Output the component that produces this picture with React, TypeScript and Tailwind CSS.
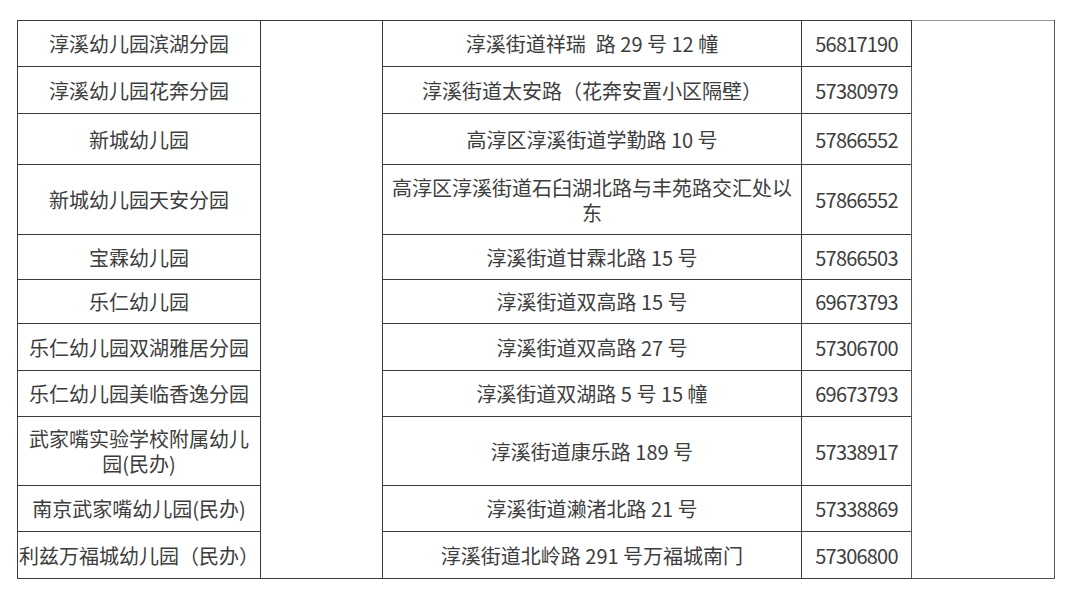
// Kindergarten contact table: name / (blank) / address / phone / (blank)
const rows: { name: React.ReactNode; addr: React.ReactNode; phone: string; h: number }[] = [
  { name: '淳溪幼儿园滨湖分园', addr: '淳溪街道祥瑞\u2002路 29 号 12 幢', phone: '56817190', h: 46 },
  { name: '淳溪幼儿园花奔分园', addr: '淳溪街道太安路（花奔安置小区隔壁）', phone: '57380979', h: 47 },
  { name: '新城幼儿园', addr: '高淳区淳溪街道学勤路 10 号', phone: '57866552', h: 51 },
  {
    name: '新城幼儿园天安分园',
    addr: (
      <>
        高淳区淳溪街道石臼湖北路与丰苑路交汇处以
        <br />
        东
      </>
    ),
    phone: '57866552',
    h: 70,
  },
  { name: '宝霖幼儿园', addr: '淳溪街道甘霖北路 15 号', phone: '57866503', h: 45 },
  { name: '乐仁幼儿园', addr: '淳溪街道双高路 15 号', phone: '69673793', h: 44 },
  { name: '乐仁幼儿园双湖雅居分园', addr: '淳溪街道双高路 27 号', phone: '57306700', h: 47 },
  { name: '乐仁幼儿园美临香逸分园', addr: '淳溪街道双湖路 5 号 15 幢', phone: '69673793', h: 46 },
  {
    name: (
      <>
        武家嘴实验学校附属幼儿
        <br />
        园(民办)
      </>
    ),
    addr: '淳溪街道康乐路 189 号',
    phone: '57338917',
    h: 69,
  },
  { name: '南京武家嘴幼儿园(民办)', addr: '淳溪街道濑渚北路 21 号', phone: '57338869', h: 46 },
  { name: '利兹万福城幼儿园（民办）', addr: '淳溪街道北岭路 291 号万福城南门', phone: '57306800', h: 47 },
]

const cell = 'border-[1.5px] border-[#3c3c3c] text-center align-middle p-0 leading-[25px]'

export default function App() {
  return (
    <div className="w-[1080px] h-[604px] bg-white pt-[20px] pl-[17px] overflow-hidden">
      <table
        className="table-fixed border-collapse text-[20px] text-[#3d3d3d]"
        style={{ fontFamily: '"Noto Sans CJK SC", "Noto Sans", sans-serif' }}
      >
        <colgroup>
          <col className="w-[243px]" />
          <col className="w-[122px]" />
          <col className="w-[419px]" />
          <col className="w-[110px]" />
          <col className="w-[143px]" />
        </colgroup>
        <tbody>
          {rows.map((r, i) => (
            <tr key={i} style={{ height: r.h }}>
              <td className={cell}>{r.name}</td>
              {i === 0 && <td rowSpan={rows.length} className={cell} />}
              <td className={cell}>{r.addr}</td>
              <td className={`${cell} tracking-[-0.8px]`}>{r.phone}</td>
              {i === 0 && (
                <td
                  rowSpan={rows.length}
                  className="border-[1.5px] border-[#555] border-t-[#9a9a9a] p-0"
                />
              )}
            </tr>
          ))}
        </tbody>
      </table>
    </div>
  )
}
